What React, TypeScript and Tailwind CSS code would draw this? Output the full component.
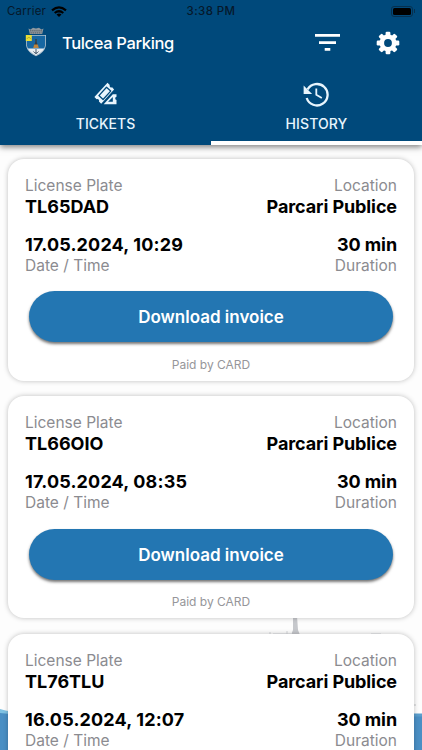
const font = 'font-["Inter","Liberation_Sans",sans-serif]';

function Crest() {
  return (
    <svg className="block h-[30px] w-[22px]" viewBox="0 0 22 30">
      <path d="M3.500 1.500l2 1L8 .8l3 .7 3-.7 2.500 1.700 2-1-1.300 5.500h-12.400z" fill="#8d979e" />
      <path d="M5 3.800h12M5.500 5.900h11" stroke="#4d5962" strokeWidth=".9" strokeDasharray="1.400 .7" />
      <path d="M1 8h20v8.500c0 6.700-4.900 10.700-10 12.700C5.900 27.200 1 23.200 1 16.500z" fill="#b4c3cd" />
      <path d="M1.800 8.800h18.400v7.700c0 6.100-4.500 9.700-9.200 11.600-4.700-1.900-9.200-5.500-9.200-11.600z" fill="#1767a2" />
      <path d="M2.700 21.500h16.600c-1.700 3.300-4.800 5.400-8.300 6.800-3.500-1.400-6.600-3.500-8.300-6.800z" fill="#e8edf0" />
      <path d="M.8 8h6v6h-6z" fill="#e8dd36" />
      <path d="M1.800 12l2-2 2 2" stroke="#b0ab34" fill="none" />
      <path d="M10.300 12h1.400v3l1.600 5H8.700l1.600-5z" fill="#333d43" />
      <path d="M9.200 17.500h3.600l1 3.500H8.200z" fill="#bd843e" />
      <path d="M11 22v5M8.500 24.500q2.500 3.500 5 0" stroke="#405468" fill="none" />
    </svg>
  );
}

function GearIcon() {
  return (
    <svg className="block size-[24px]" viewBox="-12 -12 24 24" fill="#fff">
      <circle r="6.200" fill="none" stroke="#fff" strokeWidth="4.600" />
      {[0, 45, 90, 135, 180, 225, 270, 315].map((a) => (
        <rect key={a} x="-2.400" y="-11.300" width="4.800" height="4.600" rx="1.200" transform={`rotate(${a})`} />
      ))}
    </svg>
  );
}

function TicketsIcon() {
  return (
    <svg className="block h-[24px] w-[26px]" viewBox="0 0 26 24">
      <path d="M14.500 .8l2.300 2.200a1.700 1.700 0 0 0 2.300 2.300l2 2.100L8.200 21.800l-2.300-2.200a1.700 1.700 0 0 0-2.300-2.300l-2.200-2.200z" fill="#e8f5fd" />
      <path d="M13.500 5.200l4.200 3.900-7.600 8.400-4.200-3.900z" fill="none" stroke="#00497b" strokeWidth="1.300" strokeLinejoin="round" />
      <path d="M19.800 12.300h3.700v2.500a1.700 1.700 0 0 0 0 3.300v4.200H10.700z" fill="#e8f5fd" />
      <path d="M19.800 15v4.700h-4.700z" fill="#00497b" />
    </svg>
  );
}

function HistoryIcon() {
  return (
    <svg className="-ml-[2px] block h-[26px] w-[28px]" viewBox="302 81 28 26" fill="none" stroke="#e8f5fd">
      <path d="M307.600 89.400A10.700 10.700 0 1 1 306.700 98" strokeWidth="2.300" />
      <path d="M303.600 85.500v8.500h8.500z" fill="#e8f5fd" stroke="none" />
      <path d="M316.300 88.500v6.300l5.500 3.200" strokeWidth="1.800" />
    </svg>
  );
}

type FieldProps = { label: string; value: string; right?: boolean; below?: boolean; spacing: string };

function Field({ label, value, right, below, spacing }: FieldProps) {
  return (
    <div className={`flex ${below ? "flex-col-reverse" : "flex-col"} ${right ? "items-end" : "items-start"}`}>
      <span className="text-[15.5px] leading-[21px] text-[#8b8b90]">{label}</span>
      <span className={`text-[18px] font-bold leading-[21px] text-black ${spacing}`}>{value}</span>
    </div>
  );
}

function Ticket({ plate, date, footer = true }: { plate: string; date: string; footer?: boolean }) {
  return (
    <article className="h-[222px] shrink-0 rounded-[16px] bg-white px-[17px] pt-[16px] shadow-[0_0_5px_rgba(0,0,0,0.25)]">
      <div className="flex justify-between">
        <Field label="License Plate" value={plate} spacing="tracking-[0px]" />
        <Field label="Location" value="Parcari Publice" right spacing="tracking-[-0.1px]" />
      </div>
      <div className="mt-[17px] flex justify-between">
        <Field label="Date / Time" value={date} below spacing="tracking-[0.15px]" />
        <Field label="Duration" value="30 min" right below spacing="tracking-[-0.1px]" />
      </div>
      {footer && (
        <>
          <button className="mx-auto mt-[15.500px] block h-[51px] w-[364px] rounded-full bg-[#2376b2] pt-[3px] text-[17px] font-semibold text-white shadow-[0_2px_3px_rgba(0,0,0,0.55)]">
            Download invoice
          </button>
          <p className="mt-[13.500px] text-center text-[12px] leading-[18px] text-[#96969a]">Paid by CARD</p>
        </>
      )}
    </article>
  );
}

export default function App() {
  return (
    <div className={`relative flex h-[750px] w-[422px] flex-col overflow-hidden bg-[#fdfdfd] ${font}`}>
      <svg className="absolute bottom-0 left-0 h-[140px] w-full" viewBox="0 610 422 140">
        <path d="M293 616h4l1 14 2 5h-9l2-5z" fill="#c6c8cc" />
        <path d="M270 634v-2m17 3v-4m-14 3h18m90 0h-10" stroke="#d5d7da" />
        <path d="M0 709q10 3 30 5v4H0z" fill="#7fc2e3" />
        <path d="M0 713l30 3H422v34H0z" fill="#4a8fc4" />
        <path d="M390 715h32" stroke="#5b9ecd" strokeWidth="3" />
        <path d="M412 705h4" stroke="#c6c8cc" />
      </svg>
      <header className="relative z-10 flex h-[145px] shrink-0 flex-col bg-[#00497b] shadow-[0_2px_6px_rgba(0,0,0,0.5)]">
        <div className="grid h-[22px] grid-cols-3 items-center px-[7px] text-[11.5px] leading-[22px] text-[#06182a]">
          <div className="flex items-center gap-[5px]">
            <span className="tracking-[0.2px]">Carrier</span>
            <svg className="h-[11px] w-[16px]" viewBox="0 0 16 11" fill="none" stroke="#000" strokeWidth="2.200">
              <path d="M1 4.300q7-6 14 0M3.700 7q4.300-3.500 8.600 0" />
              <path d="M5.500 8.500q2.500-2 5 0L8 11z" fill="#000" stroke="none" />
            </svg>
          </div>
          <span className="text-center font-medium tracking-[0.4px]">3:38 PM</span>
          <div className="flex items-center justify-end">
            <span className="h-[11px] w-[22px] rounded-[3px] border border-[#06304f] p-px"><span className="block h-full rounded-[1.500px] bg-black" /></span>
            <span className="ml-px h-[4px] w-px bg-[#06304f]" />
          </div>
        </div>
        <div className="flex h-[42px] items-center pl-[25px] pr-[22px]">
          <div className="-mt-[2px]"><Crest /></div>
          <h1 className="ml-[15px] text-[16.5px] font-medium leading-[22px] tracking-[-0.35px] text-white">Tulcea Parking</h1>
          <div className="ml-auto flex items-center gap-[36px]">
            <svg className="h-[18px] w-[25px]" viewBox="0 0 25 18" fill="#fff">
              <path d="M0 0h25v2.700H0zM4 7.200h17v2.700H4zM9.700 14h5.600v2.700H9.700z" />
            </svg>
            <GearIcon />
          </div>
        </div>
        <nav className="grid flex-1 grid-cols-2 text-[14px] font-medium leading-[20px] text-[#e8f5fd]">
          <div className="flex flex-col items-center pt-[18px]">
            <TicketsIcon />
            <span className="mt-[8px]">TICKETS</span>
          </div>
          <div className="flex flex-col items-center border-b-[4.500px] border-white pt-[17px]">
            <HistoryIcon />
            <span className="mt-[7px] tracking-[0.1px]">HISTORY</span>
          </div>
        </nav>
      </header>
      <main className="relative flex flex-col gap-[15.500px] px-[8px] pt-[13.500px]">
        <Ticket plate="TL65DAD" date="17.05.2024, 10:29" />
        <Ticket plate="TL66OIO" date="17.05.2024, 08:35" />
        <Ticket plate="TL76TLU" date="16.05.2024, 12:07" footer={false} />
      </main>
    </div>
  );
}
